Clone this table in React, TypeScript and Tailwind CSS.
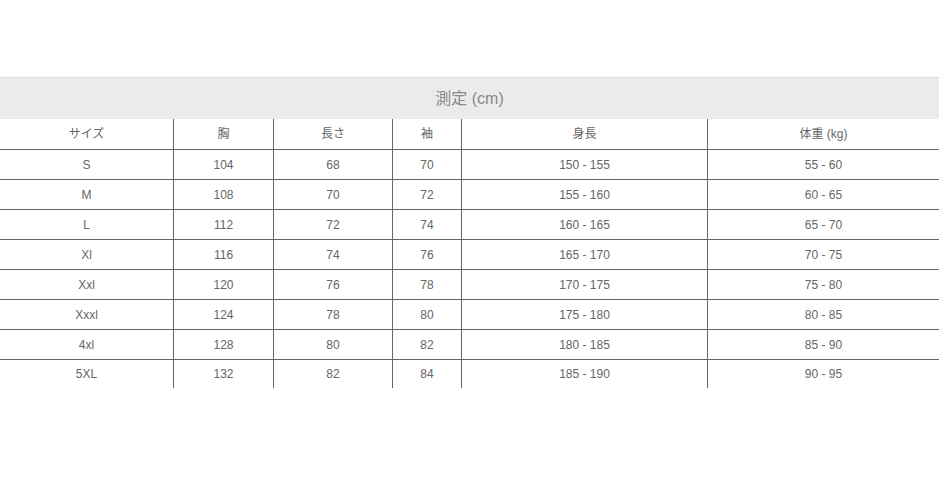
import React from 'react';

const headers = ['サイズ', '胸', '長さ', '袖', '身長', '体重 (kg)'];

const rows: string[][] = [
  ['S', '104', '68', '70', '150 - 155', '55 - 60'],
  ['M', '108', '70', '72', '155 - 160', '60 - 65'],
  ['L', '112', '72', '74', '160 - 165', '65 - 70'],
  ['Xl', '116', '74', '76', '165 - 170', '70 - 75'],
  ['Xxl', '120', '76', '78', '170 - 175', '75 - 80'],
  ['Xxxl', '124', '78', '80', '175 - 180', '80 - 85'],
  ['4xl', '128', '80', '82', '180 - 185', '85 - 90'],
  ['5XL', '132', '82', '84', '185 - 190', '90 - 95'],
];

const Row = ({ cells, h, last }: { cells: string[]; h: string; last?: boolean }) => (
  <div
    className={`grid grid-cols-[174px_100px_119px_69px_246px_1fr] ${h} ${
      last ? '' : 'border-b border-[#666]'
    }`}>
    {cells.map((c, i) => (
      <div
        key={i}
        className={`flex items-center justify-center ${i < 5 ? 'border-r border-[#666]' : ''}`}>
        {c}
      </div>
    ))}
  </div>
);

export default function App() {
  return (
    <div
      className="w-[939px] h-[477px] bg-white pt-[77px] text-[12px] text-[#666]"
      style={{ fontFamily: '"Liberation Sans", Arial, "Noto Sans CJK JP", sans-serif' }}>
      <div className="h-[42px] border-t border-[#dedede] bg-[#ebebeb] flex items-center justify-center text-[16px] text-[#888]">
        測定 (cm)
      </div>
      <Row cells={headers} h="h-[31px]" />
      {rows.map((r, i) => (
        <Row
          key={r[0]}
          cells={r}
          h={i === rows.length - 1 ? 'h-[28px]' : 'h-[30px]'}
          last={i === rows.length - 1}
        />
      ))}
    </div>
  );
}
